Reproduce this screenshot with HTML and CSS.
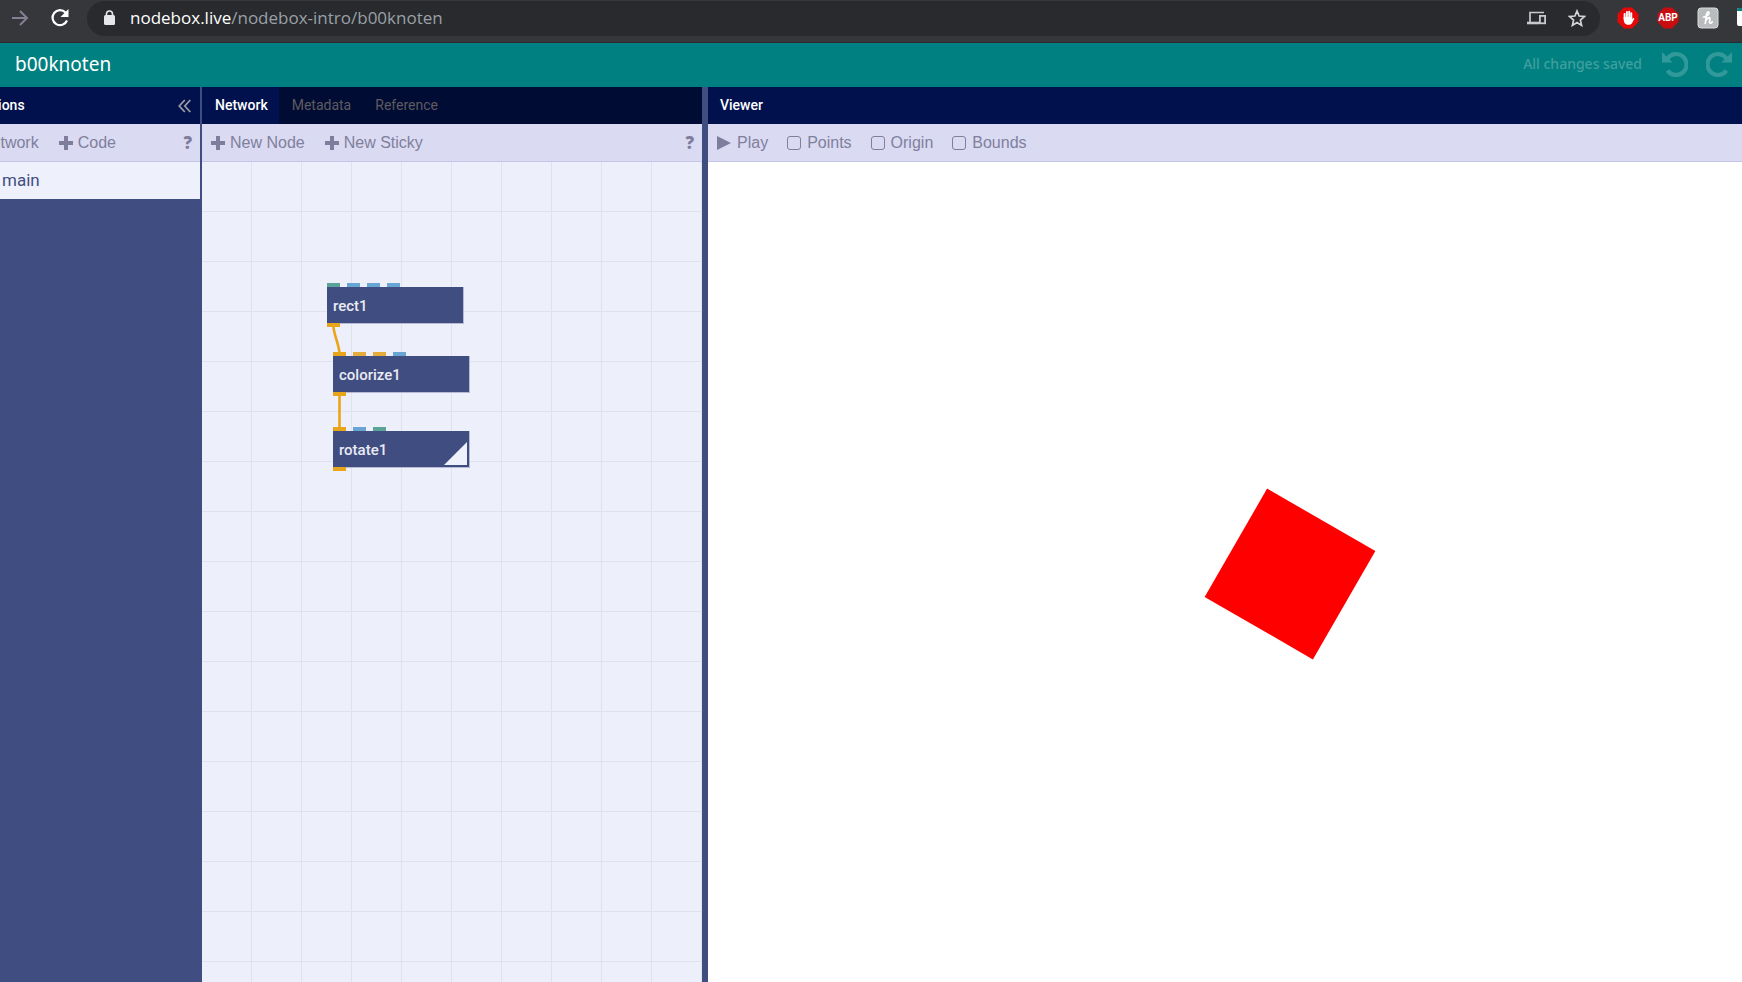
FILE: index.html
```
<!DOCTYPE html>
<html lang="en">
<head>
<meta charset="utf-8">
<title>b00knoten</title>
<link rel="stylesheet" href="styles.css">
</head>
<body>
<div class="window">
  <div class="browser">
    <button class="nav" aria-label="Forward"><svg width="18" height="18" viewBox="0 0 18 18" fill="none" stroke="#857f96" stroke-width="2"><path d="M1 9h15M9 2l7 7-7 7"/></svg></button>
    <button class="nav" aria-label="Reload"><svg width="20" height="20" viewBox="0 0 20 20"><path d="M15.500 4.500A7.500 7.500 0 1 0 17 12.500" fill="none" stroke="#fff" stroke-width="2.200"/><path d="M18.500 1v8h-8z" fill="#fff"/></svg></button>
    <div class="address">
      <svg class="lock" width="12" height="16" viewBox="0 0 12 16"><rect x="1" y="5" width="11" height="10" rx="1.500" fill="#e4e6ea"/><path d="M3.500 6V4a3 3 0 0 1 6 0v2" fill="none" stroke="#e4e6ea" stroke-width="1.600"/></svg>
      <a class="url" href="#"><span class="host">nodebox.live</span>/nodebox-intro/b00knoten</a>
      <div class="address-actions">
        <button class="nav" aria-label="Send to device"><svg width="20" height="14" viewBox="0 0 20 14" fill="none" stroke="#c6c9ce"><path d="M17 1.500H3V11" stroke-width="1.700"/><path d="M0 12h12" stroke-width="2.600"/><rect x="12.900" y="4.900" width="5.200" height="7.400" stroke-width="1.800"/></svg></button>
        <button class="nav" aria-label="Bookmark"><svg width="18" height="18" viewBox="0 0 18 18" fill="none" stroke="#d3d5d9" stroke-width="1.700"><path d="M9 2l2.100 5 5.400.5-4.100 3.600 1.200 5.300L9 13.600l-4.600 2.800 1.200-5.300L1.500 7.500l5.400-.5z"/></svg></button>
      </div>
    </div>
    <div class="extensions">
      <button class="nav" aria-label="AdBlock"><svg width="22" height="22" viewBox="0 0 22 22"><path d="M7 .5h8L21.500 7v8L15 21.500H7L.5 15V7z" fill="#e50808"/><path d="M7.600 11.500V7M9.900 10V5M12.200 10V4.600M14.300 11V6.200" stroke="#fff" stroke-width="1.900" stroke-linecap="round"/><path d="M6.700 10h8.500v2.200l.8-.9c.8-.6 1.600.1 1.100 1L15 16.200c-1.800 2-5.300 2-7 .2-1-1.300-1.300-2.600-1.300-4.400z" fill="#fff"/></svg></button>
      <button class="nav" aria-label="Adblock Plus"><svg width="22" height="22" viewBox="0 0 22 22"><path d="M7 .5h8L21.500 7v8L15 21.500H7L.5 15V7z" fill="#c70d0f"/><text class="abp" x="11" y="14" text-anchor="middle">ABP</text></svg></button>
      <button class="nav" aria-label="Honey"><svg width="22" height="22" viewBox="0 0 22 22"><rect x="1" y="1" width="20" height="20" rx="3" fill="#b9bcbd" stroke="#d9dbdc" stroke-width="1"/><path d="M6.500 10C9 10 12.500 7.500 12 5.500c-.6-1.500-2.200-.3-2.500 2L8.300 16.500M8.800 13.500c1.500-2.600 4.400-3.900 4.200-1.600-.2 1.600-1.200 4.300.3 4.300.9 0 1.500-.6 1.900-1.400" fill="none" stroke="#fff" stroke-width="1.700" stroke-linecap="round"/></svg></button>
      <button class="nav clipped" aria-label="Extension"><svg width="22" height="22" viewBox="0 0 22 22"><rect y="1" width="20" height="18" rx="2" fill="#fff"/><path d="M0 4V3a2 2 0 0 1 2-2h16v3z" fill="#078080"/></svg></button>
    </div>
  </div>

  <header class="app-header">
    <h1 class="title">b00knoten</h1>
    <span class="status">All changes saved</span>
    <button class="history" aria-label="Undo"><svg width="26" height="26" viewBox="0 0 26 26"><path d="M5.500 7.500A10.500 10.500 0 1 1 5.500 19.500" fill="none" stroke="currentColor" stroke-width="4.200"/><path d="M0 1v10.500h10.500z" fill="currentColor"/></svg></button>
    <button class="history" aria-label="Redo"><svg width="26" height="26" viewBox="0 0 26 26"><g transform="matrix(-1 0 0 1 26 0)"><path d="M5.500 7.500A10.500 10.500 0 1 1 5.500 19.500" fill="none" stroke="currentColor" stroke-width="4.200"/><path d="M0 1v10.500h10.500z" fill="currentColor"/></g></svg></button>
  </header>

  <main class="workspace">
    <section class="functions">
      <div class="tabs functions-tabs">
        <span class="heading functions-heading">Functions</span>
        <button class="collapse" aria-label="Collapse"><svg width="13" height="14" viewBox="0 0 13 14" fill="none" stroke="#9b9ba2" stroke-width="1.800"><path d="M6.800 1L1.300 7l5.500 6M12.300 1L6.800 7l5.500 6"/></svg></button>
      </div>
      <div class="toolbar">
        <div class="tools functions-tools">
          <button class="tool"><svg class="plus" width="14" height="14" viewBox="0 0 14 14"><path d="M5 0h4v5h5v4H9v5H5V9H0V5h5z"/></svg>Network</button>
          <button class="tool"><svg class="plus" width="14" height="14" viewBox="0 0 14 14"><path d="M5 0h4v5h5v4H9v5H5V9H0V5h5z"/></svg>Code</button>
        </div>
        <button class="help">?</button>
      </div>
      <a class="function-item" href="#">main</a>
    </section>

    <section class="network">
      <div class="tabs network-tabs">
        <button class="tab active">Network</button>
        <button class="tab">Metadata</button>
        <button class="tab">Reference</button>
      </div>
      <div class="toolbar">
        <div class="tools">
          <button class="tool"><svg class="plus" width="14" height="14" viewBox="0 0 14 14"><path d="M5 0h4v5h5v4H9v5H5V9H0V5h5z"/></svg>New Node</button>
          <button class="tool"><svg class="plus" width="14" height="14" viewBox="0 0 14 14"><path d="M5 0h4v5h5v4H9v5H5V9H0V5h5z"/></svg>New Sticky</button>
        </div>
        <button class="help">?</button>
      </div>
      <div class="canvas">
        <div class="node rect">
          <div class="ports"><i class="port green"></i><i class="port blue"></i><i class="port blue"></i><i class="port blue"></i></div>
          rect1
          <i class="port out"></i>
        </div>
        <div class="node colorize">
          <div class="ports"><i class="port linked"></i><i class="port amber"></i><i class="port amber"></i><i class="port blue"></i></div>
          colorize1
          <i class="port out"></i>
        </div>
        <div class="node rotate">
          <div class="ports"><i class="port linked"></i><i class="port blue"></i><i class="port green"></i></div>
          rotate1
          <svg class="rendered" width="23" height="23" viewBox="0 0 23 23"><path d="M23 0v23H0z" fill="#eef0fb"/></svg>
          <i class="port out"></i>
        </div>
        <svg class="links" width="500" height="320" viewBox="0 0 500 320" fill="none" stroke="#eba414" stroke-width="2.600"><path d="M131.500 165C132 173 137.500 184 137.500 192M137.500 233V267"/></svg>
      </div>
    </section>

    <section class="viewer">
      <div class="tabs viewer-tabs"><span class="heading">Viewer</span></div>
      <div class="toolbar">
        <div class="tools viewer-tools">
          <button class="tool"><svg class="play" width="14" height="14" viewBox="0 0 14 14"><path d="M0 0l14 7-14 7z"/></svg>Play</button>
          <label class="tool"><input class="check" type="checkbox">Points</label>
          <label class="tool"><input class="check" type="checkbox">Origin</label>
          <label class="tool"><input class="check" type="checkbox">Bounds</label>
        </div>
      </div>
      <div class="stage">
        <svg class="drawing" width="172" height="172" viewBox="-86 -86 172 172"><rect x="-62.500" y="-62.500" width="125" height="125" transform="rotate(30)" fill="#f00"/></svg>
      </div>
    </section>
  </main>
</div>
</body>
</html>
```
FILE: styles.css
```
* { box-sizing: border-box; }
body { margin: 0; font-family: Roboto, "Noto Sans", sans-serif; }
button { margin: 0; padding: 0; border: 0; background: none; font: inherit; color: inherit; cursor: pointer; }
svg { display: block; flex: none; }
a { text-decoration: none; }
.window { display: flex; flex-direction: column; height: 100vh; overflow: hidden; }

.browser { display: flex; align-items: center; flex: none; height: 43px; padding: 0 0 6px 11px; background: #35373b; border-bottom: 1px solid #292b2e; overflow: hidden; }
.browser > .nav { margin-right: 21px; }
.browser > .nav + .nav { margin-right: 17px; }
.nav { display: flex; flex: none; }
.address { display: flex; align-items: center; flex: 1; height: 35px; padding: 0 14px 0 16px; border-radius: 18px; background: #282a2e; }
.url { margin-left: 15px; font: 17px/24px "Open Sans", "Noto Sans", sans-serif; color: #9aa0a6; }
.host { color: #fff; }
.address-actions { display: flex; align-items: center; gap: 21px; margin-left: auto; }
.extensions { display: flex; align-items: center; gap: 18px; width: 125px; margin-left: 17px; }
.clipped { width: 5px; overflow: hidden; }
.abp { font: bold 10px Roboto, sans-serif; fill: #fff; }

.app-header { display: flex; align-items: center; flex: none; height: 44px; padding: 0 10px 2px 15px; background: #008080; color: #fff; }
.title { margin: 0 auto 0 0; font: 19px/28px "Noto Sans", sans-serif; }
.status { margin-right: 20px; font: 500 14px/20px "Noto Sans", sans-serif; color: #409f9f; }
.history { display: flex; color: #319999; }
.history + .history { margin-left: 18px; }

.workspace { display: grid; grid-template-columns: 202px 506px 1fr; flex: 1; min-height: 0; }
.functions, .network, .viewer { display: flex; flex-direction: column; min-width: 0; }
.functions { background: #404d80; border-right: 2px solid #404d80; overflow: hidden; }
.network { border-right: 6px solid #404d80; }
.tabs { display: flex; align-items: center; flex: none; height: 37px; background: #00114d; color: #fff; font-size: 14px; line-height: 18px; }
.network-tabs { background: #000c33; }
.tab { height: 37px; padding: 0 11px 2px 13px; color: #5f5b60; }
.tab.active { background: #00114d; color: #fff; font-weight: 500; }
.heading { padding-bottom: 2px; font-weight: 500; }
.functions-tabs { justify-content: flex-end; padding-right: 9px; }
.functions-heading { margin-right: auto; margin-left: -37px; }
.viewer-tabs { padding-left: 12px; }
.collapse { display: flex; }

.toolbar { display: flex; align-items: center; justify-content: space-between; flex: none; height: 38px; padding: 0 8px 0 9px; background: #dadaf3; border-bottom: 1px solid #c6c5e9; color: #80809b; }
.tools { display: flex; gap: 20px; }
.functions-tools { margin-left: -48px; }
.viewer-tools { gap: 19px; }
.tool { display: flex; align-items: center; gap: 5px; font: 16px/20px "Liberation Sans", Arial, sans-serif; white-space: nowrap; }
.viewer-tools .tool { gap: 6px; }
.plus, .play { fill: #7f7d9c; }
.help { font: 800 17px/20px "Open Sans", "Noto Sans", sans-serif; color: #7f7d9c; }
.check { appearance: none; width: 14px; height: 14px; margin: 0; border: 1px solid #80809b; border-radius: 3px; }
.function-item { height: 37px; padding: 0 2px; background: #eef0fb; color: #404d80; font-size: 17px; line-height: 36px; }

.canvas { position: relative; flex: 1; background-color: #edeffb; background-image: linear-gradient(to right, transparent 49px, #dfe1ef 49px), linear-gradient(to bottom, transparent 49px, #dfe1ef 49px); background-size: 50px 50px; overflow: hidden; }
.node { position: absolute; display: flex; align-items: center; width: 137px; height: 37px; padding: 2px 6px 0; background: #404d80; border: 1px solid #b7bad4; border-width: 0 1px 1px 0; color: #e9ebf5; font-size: 15px; font-weight: 500; }
.rect { left: 125px; top: 125px; }
.colorize { left: 131px; top: 194px; }
.rotate { left: 131px; top: 269px; }
.ports { position: absolute; left: 0; bottom: 100%; display: flex; gap: 7px; }
.port { display: block; width: 13px; height: 4px; }
.green { background: #5aa398; }
.blue { background: #68a5d3; }
.amber { background: #e4ac3c; }
.linked, .out { background: #e8a41a; }
.out { position: absolute; left: 0; top: 36px; }
.rendered { position: absolute; right: 2px; bottom: 2px; }
.links { position: absolute; left: 0; top: 0; }

.stage { display: flex; align-items: center; justify-content: center; flex: 1; background: #fff; padding: 4px 0 0 130px; }
```
